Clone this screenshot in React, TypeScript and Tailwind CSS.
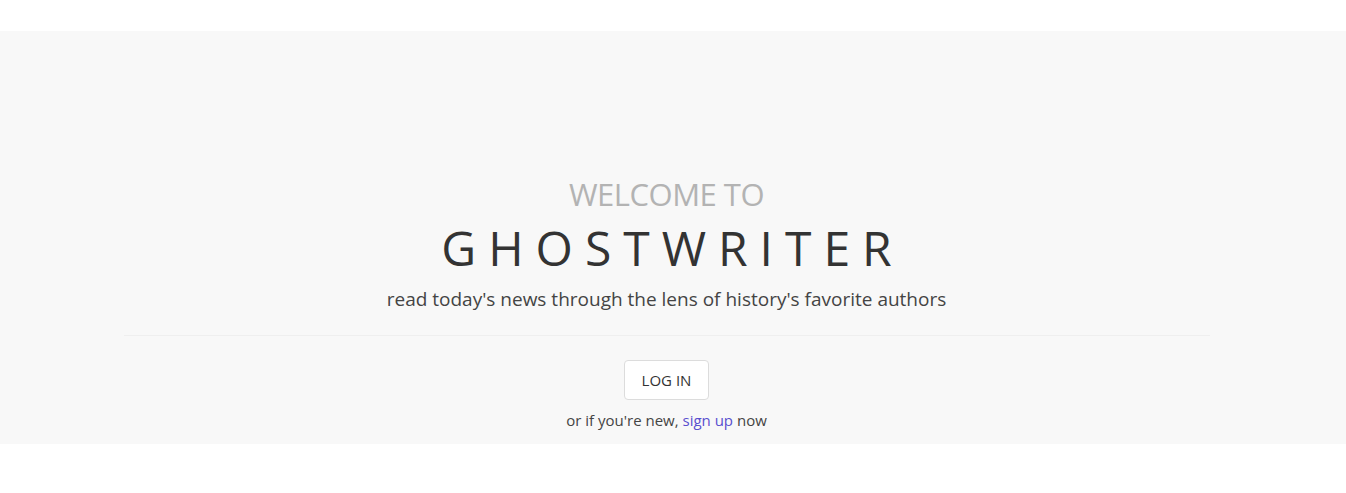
import React from 'react';

const App: React.FC = () => {
  return (
    <div className="min-h-[493px] bg-white pt-[31px] font-['Open_Sans',sans-serif]">
      <div className="bg-[#f8f8f8] h-[413px] flex flex-col items-center pt-[143px] pr-[13px]">
        <p className="text-[31px] leading-[40px] text-[#b3b3b3] tracking-[-0.5px]">WELCOME TO</p>
        <h1 className="text-[48px] leading-[56px] text-[#333333] tracking-[12px] pl-[12px] mt-[6px]">GHOSTWRITER</h1>
        <p className="text-[19px] leading-[28px] text-[#444444] mt-[9px]">
          read today's news through the lens of history's favorite authors
        </p>
        <div className="w-[1086px] border-t border-[#efefef] mt-[22px]" />
        <button className="mt-[24px] h-[40px] w-[85px] bg-white border border-[#dcdcdc] rounded-[4px] text-[15px] text-[#333333]">
          LOG IN
        </button>
        <p className="mt-[9px] text-[15px] text-[#444444]">
          or if you're new, <a href="#" className="text-[#5a4fcf]">sign up</a> now
        </p>
      </div>
    </div>
  );
};

export default App;
